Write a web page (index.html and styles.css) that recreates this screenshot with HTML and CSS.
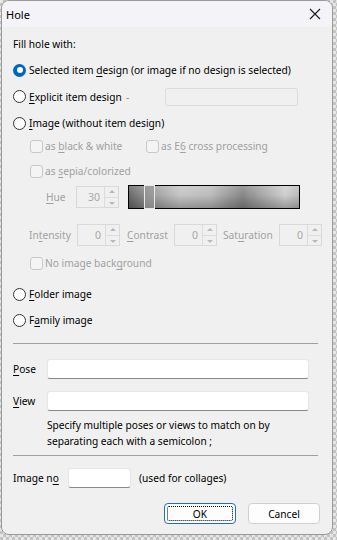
FILE: index.html
```html
<!DOCTYPE html>
<html>
<head>
<meta charset="utf-8">
<link rel="stylesheet" href="styles.css">
</head>
<body>
<div class="win">
  <div class="titlebar">
    <span class="title">Hole</span>
    <svg class="close" width="12" height="12" viewBox="0 0 12 12"><path d="M1 1L11 11M11 1L1 11" stroke="#1a1a1a" stroke-width="1.1" fill="none"/></svg>
  </div>
  <div class="content">
    <div class="row r-fill">Fill hole with:</div>
    <div class="row r1"><span class="radio checked"></span><span>Selected item <u>d</u>esign (or image if no design is selected)</span></div>
    <div class="row r2"><span class="radio"></span><span class="lbl-exp"><u>E</u>xplicit item design</span><span class="dash">-</span><span class="dis-input"></span></div>
    <div class="row r3"><span class="radio"></span><span><u>I</u>mage (without item design)</span></div>
    <div class="row r-cb dis">
      <span class="cb"></span><span class="cbl1">as <u>b</u>lack &amp; white</span>
      <span class="cb"></span><span>as E<u>6</u> cross processing</span>
    </div>
    <div class="row r-sepia dis"><span class="cb"></span><span>as <u>s</u>epia/colorized</span></div>
    <div class="row r-hue dis">
      <span class="hue-lbl"><u>H</u>ue</span>
      <span class="spin"><span class="val">30</span><span class="btns"><i class="up"></i><i class="dn"></i></span></span>
      <span class="grad"><span class="thumb"></span></span>
    </div>
    <div class="row r-int dis">
      <span class="lbl-int">In<u>t</u>ensity</span>
      <span class="spin"><span class="val">0</span><span class="btns"><i class="up"></i><i class="dn"></i></span></span>
      <span class="lbl-con"><u>C</u>ontrast</span>
      <span class="spin"><span class="val">0</span><span class="btns"><i class="up"></i><i class="dn"></i></span></span>
      <span class="lbl-sat">Sat<u>u</u>ration</span>
      <span class="spin"><span class="val">0</span><span class="btns"><i class="up"></i><i class="dn"></i></span></span>
    </div>
    <div class="row r-nobg dis"><span class="cb"></span><span>No image back<u>g</u>round</span></div>
    <div class="row r-folder"><span class="radio"></span><span><u>F</u>older image</span></div>
    <div class="row r-family"><span class="radio"></span><span>F<u>a</u>mily image</span></div>
    <div class="sep sep1"></div>
    <div class="row r-pose"><span class="flbl"><u>P</u>ose</span><span class="input"></span></div>
    <div class="row r-view"><span class="flbl"><u>V</u>iew</span><span class="input"></span></div>
    <div class="hint">Specify multiple poses or views to match on by<br>separating each with a semicolon ;</div>
    <div class="sep sep2"></div>
    <div class="row r-imgno"><span class="lbl-imgno">Image n<u>o</u></span><span class="input small"></span><span>(used for collages)</span></div>
    <div class="row r-btns"><span class="btn ok"><span class="focus">OK</span></span><span class="btn">Cancel</span></div>
  </div>
</div>
</body>
</html>
```
FILE: styles.css
```css
* { box-sizing: border-box; }
html, body { margin: 0; padding: 0; }
body {
  width: 337px; height: 540px; overflow: hidden;
  background-color: #d8d8d8;
  background-image: repeating-conic-gradient(#c4c4c4 0 25%, #e6e6e6 0 50%);
  background-size: 6px 6px;
  font-family: "Noto Sans", "Segoe UI", sans-serif;
  font-size: 10.2px;
  color: #000;
}
.win {
  margin-left: 1px;
  width: 332px; height: 535px;
  background: #f0f0f0;
  border: 1px solid #9a9a9a;
  border-radius: 8px;
  overflow: hidden;
}
.titlebar {
  height: 26px;
  background: #f3f3f8;
  display: flex; align-items: center; justify-content: space-between;
  padding: 0 11px 0 4px;
}
.title { font-size: 11px; }
.close { display: block; }
.content { padding: 0 0 0 11px; }
.row { display: flex; align-items: center; white-space: nowrap; }
u { text-decoration: underline; text-underline-offset: 2px; text-decoration-thickness: 1px; }
.dis { color: #a0a0a0; }
.r-fill { height: 16px; margin-top: 9px; }
.r1 { height: 16px; margin-top: 10px; }
.r2 { height: 19px; margin-top: 9px; }
.r3 { height: 16px; margin-top: 9px; }
.r-cb { height: 16px; margin-top: 7px; padding-left: 17px; }
.r-sepia { height: 16px; margin-top: 9px; padding-left: 17px; }
.r-hue { height: 24px; margin-top: 6px; }
.r-int { height: 22px; margin-top: 15px; padding-left: 16px; }
.r-nobg { height: 16px; margin-top: 9px; padding-left: 17px; }
.r-folder { height: 16px; margin-top: 15px; }
.r-family { height: 16px; margin-top: 10px; }
.radio {
  width: 13px; height: 13px; border-radius: 50%;
  border: 1px solid #333; background: #fff;
  margin-right: 3px; flex: none;
}
.radio.checked {
  border: none; background: #0067c0; position: relative;
}
.radio.checked::after {
  content: ""; position: absolute; left: 3.5px; top: 3.5px;
  width: 6px; height: 6px; border-radius: 50%; background: #fff;
}
.cb {
  width: 13px; height: 13px; border: 1px solid #c8c8c8; border-radius: 3px;
  background: #f4f4f4; margin-right: 2px; flex: none;
}
.cbl1 { width: 101px; }
.lbl-exp { width: 97px; }
.dash { width: 39px; color: #888; }
.dis-input {
  width: 133px; height: 18px;
  border: 1px solid #dcdcdc; border-radius: 2px; background: #f0f0f0;
}
.hue-lbl { margin-left: 33px; width: 30px; }
.spin {
  width: 43px; height: 22px; border: 1px solid #d9d9d9;
  display: flex; align-items: stretch; background: #f0f0f0;
  flex: none;
}
.spin .val { flex: 1; text-align: right; padding-right: 4px; line-height: 20px; color: #a8a8a8; font-size: 10.5px; }
.spin .btns { width: 14px; display: flex; flex-direction: column; border-left: 1px solid #dcdcdc; }
.spin .btns i { flex: 1; position: relative; }
.spin .btns i.up { border-bottom: 1px solid #dcdcdc; }
.spin .btns i::after {
  content: ""; position: absolute; left: 4px; top: 3px;
  border-left: 3px solid transparent; border-right: 3px solid transparent;
}
.spin .btns i.up::after { border-bottom: 3px solid #b8b8b8; }
.spin .btns i.dn::after { border-top: 3px solid #b8b8b8; top: 4px; }
.grad {
  margin-left: 9px; width: 172px; height: 24px;
  border: 1px solid #000; position: relative;
  background:
    linear-gradient(to bottom, rgba(255,255,255,0.15), rgba(0,0,0,0) 40%, rgba(0,0,0,0.25)),
    linear-gradient(to right, #6a6a6a 0%, #9a9a9a 12%, #c6c6c6 30%, #bdbdbd 48%, #9a9a9a 60%, #888 67%, #a8a8a8 78%, #cfcfcf 92%, #bbb 100%);
}
.thumb {
  position: absolute; left: 15px; top: -1px; width: 11px; height: 24px;
  border: 1px solid #e8e8e8; background: rgba(150,150,150,0.6);
}
.lbl-int { width: 48px; }
.lbl-con { margin-left: 7px; width: 47px; }
.lbl-sat { margin-left: 6px; width: 56px; }
.sep { height: 1px; background: #a0a0a0; width: 305px; }
.sep1 { margin-top: 15px; }
.r-pose { height: 20px; margin-top: 15px; }
.r-view { height: 20px; margin-top: 12px; }
.flbl { width: 34px; }
.input {
  width: 262px; height: 20px; background: #fff;
  border: 1px solid #e6e6e6; border-bottom: 1px solid #8a8a8a; border-radius: 3px;
}
.hint { margin-top: 6px; margin-left: 34px; line-height: 16px; }
.sep2 { margin-top: 6px; }
.r-imgno { height: 20px; margin-top: 12px; }
.lbl-imgno { width: 55px; }
.input.small { width: 63px; margin-right: 8px; }
.r-btns { height: 21px; margin-top: 15px; justify-content: flex-end; padding-right: 12px; gap: 12px; }
.btn {
  width: 72px; height: 21px; border: 1px solid #d0d0d0; border-radius: 4px;
  background: #fdfdfd; display: flex; align-items: center; justify-content: center;
}
.btn.ok { border: 1px solid #1e6fc4; padding: 2px; }
.btn .focus {
  width: 100%; height: 100%; border: 1px dotted #000; border-radius: 2px;
  display: flex; align-items: center; justify-content: center;
}
```
